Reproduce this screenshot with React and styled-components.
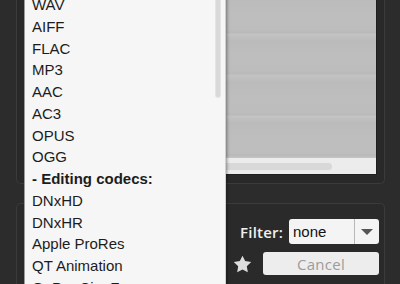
import React from 'react';
import styled, { createGlobalStyle } from 'styled-components';

const GlobalStyle = createGlobalStyle`
  html, body {
    margin: 0;
    padding: 0;
    background: #2c2c2c;
    overflow: hidden;
  }
  #root {
    width: 400px;
    height: 284px;
  }
`;

const codecs = [
  { label: 'WAV' },
  { label: 'AIFF' },
  { label: 'FLAC' },
  { label: 'MP3' },
  { label: 'AAC' },
  { label: 'AC3' },
  { label: 'OPUS' },
  { label: 'OGG' },
  { label: '- Editing codecs:', heading: true },
  { label: 'DNxHD' },
  { label: 'DNxHR' },
  { label: 'Apple ProRes' },
  { label: 'QT Animation' },
  { label: 'GoPro CineForm' },
];

const Window = styled.div`
  position: relative;
  width: 400px;
  height: 284px;
  overflow: hidden;
  background: #2c2c2c;
  display: flex;
  flex-direction: column;
  gap: 19px;
  padding: 0 15px 0 16px;
  box-sizing: border-box;
`;

const TopPanel = styled.div`
  flex: 0 0 194px;
  margin-top: -10px;
  border: 1px solid #3b3b3b;
  border-top: none;
  border-radius: 0 0 5px 5px;
  background: #292929;
  padding: 0 7px 8px 8px;
  box-sizing: border-box;
  display: flex;
  flex-direction: column;
`;

const Preview = styled.div`
  flex: 1;
  display: flex;
  flex-direction: column;
  border: 1px solid #1f1f1f;
  border-top: none;
`;

const Stripes = styled.div`
  flex: 1;
  background: repeating-linear-gradient(
    to bottom,
    #bbbbbb 0px,
    #bebebe 14px,
    #bdbdbd 30px,
    #b9b9b9 33px,
    #c4c4c4 34px,
    #c1c1c1 36px,
    #bbbbbb 41px
  );
  background-position: 0 10px;
`;

const HScroll = styled.div`
  height: 16px;
  background: #ececec;
  display: flex;
  align-items: center;
  padding: 0 0 0 2px;
`;

const HThumb = styled.div`
  width: 114px;
  height: 7px;
  margin-left: 190px;
  border-radius: 4px;
  background: #d8d8d8;
`;

const BottomPanel = styled.div`
  flex: 1;
  border: 1px solid #3b3b3b;
  border-bottom: none;
  border-radius: 5px 5px 0 0;
  background: #2a2a2a;
  padding: 15px 5px 0 0;
  display: flex;
  flex-direction: column;
  align-items: flex-end;
  gap: 8px;
`;

const Row = styled.div`
  display: flex;
  align-items: center;
  gap: ${p => p.$gap || 6}px;
`;

const Label = styled.span`
  font-family: "Open Sans", "Liberation Sans", sans-serif;
  font-weight: 600;
  font-size: 15px;
  color: #f0f0f0;
  letter-spacing: 0.2px;
`;

const Select = styled.div`
  width: 90px;
  height: 25px;
  display: flex;
  background: #f4f4f4;
  border-radius: 3px;
  overflow: hidden;
`;

const SelectValue = styled.div`
  flex: 1;
  font-family: "Liberation Sans", Arial, sans-serif;
  font-size: 15px;
  color: #111;
  padding-left: 4px;
  display: flex;
  align-items: center;
`;

const SelectArrow = styled.div`
  width: 24px;
  border-left: 1px solid #b8b8b8;
  display: flex;
  align-items: center;
  justify-content: center;
  &::after {
    content: '';
    border-left: 6px solid transparent;
    border-right: 6px solid transparent;
    border-top: 6px solid #555;
  }
`;

const Button = styled.button`
  width: 116px;
  height: 23px;
  border: none;
  border-radius: 3px;
  background: #ededed;
  color: #9c9c9c;
  font-family: "Open Sans", "Liberation Sans", sans-serif;
  font-size: 15px;
  padding: 0;
  letter-spacing: 0.3px;
`;

const Menu = styled.ul`
  position: absolute;
  left: 24px;
  top: -6px;
  width: 201px;
  height: 300px;
  margin: 0;
  padding: 0;
  list-style: none;
  background: #f6f6f6;
  border-left: 1px solid #9a9a9a;
  box-shadow: 1px 0 0 #cfcfcf, 2px 0 3px rgba(0, 0, 0, 0.4);
  box-sizing: border-box;
`;

const Item = styled.li`
  height: 21.75px;
  line-height: 21.75px;
  padding-left: 7px;
  font-family: "Liberation Sans", Arial, sans-serif;
  font-size: 15px;
  font-weight: ${p => (p.$heading ? 700 : 400)};
  color: #1c1c1c;
  white-space: nowrap;
`;

const VScroll = styled.div`
  position: absolute;
  top: 0;
  right: 4px;
  width: 6px;
  height: 104px;
  border-radius: 0 0 3px 3px;
  background: #d9d9d9;
  border: 1px solid #e4e4e4;
  box-sizing: border-box;
`;

const Star = () => (
  <svg width="19" height="18" viewBox="0 0 24 23">
    <path
      d="M12 0.8l3.4 7 7.7 1.1-5.6 5.4 1.3 7.7L12 18.4 5.2 22l1.3-7.7L0.9 8.9l7.7-1.1z"
      fill="#dedede"
    />
  </svg>
);

export default function App() {
  return (
    <>
      <GlobalStyle />
      <Window>
        <TopPanel>
          <Preview>
            <Stripes />
            <HScroll>
              <HThumb />
            </HScroll>
          </Preview>
        </TopPanel>
        <BottomPanel>
          <Row $gap={6}>
            <Label>Filter:</Label>
            <Select>
              <SelectValue>none</SelectValue>
              <SelectArrow />
            </Select>
          </Row>
          <Row $gap={11}>
            <Star />
            <Button>Cancel</Button>
          </Row>
        </BottomPanel>
        <Menu>
          {codecs.map(c => (
            <Item key={c.label} $heading={c.heading}>{c.label}</Item>
          ))}
          <VScroll />
        </Menu>
      </Window>
    </>
  );
}
